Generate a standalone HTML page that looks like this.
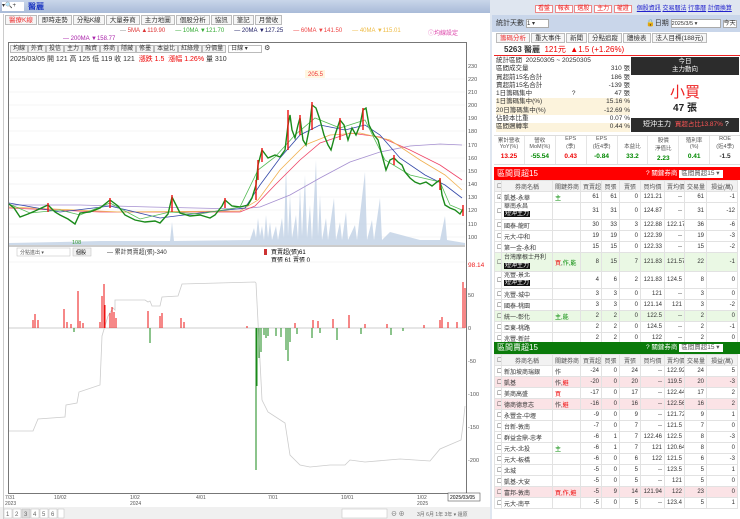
<!DOCTYPE html>
<html><head><meta charset="utf-8">
<style>
*{margin:0;padding:0;box-sizing:border-box}
body{width:740px;height:519px;overflow:hidden;background:#fff;font-family:"Liberation Sans","Noto Sans CJK TC",sans-serif;font-size:7px;color:#333;position:relative}
.a{position:absolute}
.tab{display:inline-block;border:1px solid #bbb;background:#f6f6f6;padding:0 3px;height:10px;line-height:9px;font-size:6.5px;margin-right:1px}
.btn{display:inline-block;border:1px solid #bbb;background:#f3f3f3;padding:0 2px;height:8px;line-height:7px;font-size:6px}
table{border-collapse:collapse;table-layout:fixed;width:243px;font-size:6px}
td{border:1px solid #e2e2e2;padding:0 2px;height:11px;text-align:right;white-space:nowrap;overflow:hidden}
td.n{text-align:left}
td.c{text-align:center}
.bl{background:#111;color:#fff;padding:0 1px}
.g{background:#eaf8e4}.p{background:#fbe3e6}
.hd td{background:#f2f2f2;text-align:center;color:#555}
.r{color:#e00}.gr{color:#080}
</style></head><body>
<div class="a" style="left:0;top:0;width:490px;height:13px;background:linear-gradient(#c9d6ea,#a9bbd8)"></div>
<div class="a" style="left:2px;top:2px;width:22px;height:9px;background:#fff;font-size:6px;line-height:9px">▾🔍+</div>
<div class="a" style="left:28px;top:1px;color:#1530c0;font-size:8px;font-weight:bold">醫麗</div>
<div class="a" style="left:5px;top:15px;white-space:nowrap"><span class="tab" style="color:#e33">醫療K線</span><span class="tab">即時走勢</span><span class="tab">分點K線</span><span class="tab">大量券商</span><span class="tab">主力地圖</span><span class="tab">個股分析</span><span class="tab">協訊</span><span class="tab">筆記</span><span class="tab">月營收</span></div>
<div class="a" style="left:120px;top:28px;font-size:6px;white-space:nowrap;color:#888">— <span style="color:#d33">5MA ▲119.90</span> &nbsp;&nbsp;&nbsp;&nbsp;&nbsp;<span style="color:#3a3">— 10MA ▼121.70</span> &nbsp;&nbsp;&nbsp;&nbsp;&nbsp;<span style="color:#226">— 20MA ▼127.25</span> &nbsp;&nbsp;&nbsp;&nbsp;&nbsp;<span style="color:#e44">— 60MA ▼141.50</span> &nbsp;&nbsp;&nbsp;&nbsp;&nbsp;<span style="color:#eb4">— 40MA ▼115.01</span></div>
<div class="a" style="left:428px;top:28px;font-size:6px;color:#d4a">ⓘ均線設定</div>
<div class="a" style="left:63px;top:36px;font-size:6px;color:#a2a">— 200MA ▼158.77</div>
<div class="a" style="left:8px;top:42px;width:459px;height:452px;border:1px solid #777"></div>
<div class="a" style="left:10px;top:44px;white-space:nowrap"><span class="btn">均線</span><span class="btn">外資</span><span class="btn">投信</span><span class="btn">主力</span><span class="btn">融資</span><span class="btn">券商</span><span class="btn">隱藏</span><span class="btn">修墨</span><span class="btn">本益比</span><span class="btn">紅綠燈</span><span class="btn">分價量</span> <span class="btn" style="width:34px;background:#fff">日線 ▾</span> ⚙</div>
<div class="a" style="left:10px;top:54px;font-size:7px;white-space:nowrap">2025/03/05 開 121 高 125 低 119 收 121 &nbsp;<span class="r">漲跌 1.5 &nbsp;漲幅 1.26%</span> 量 310</div>
<svg class="a" style="left:0;top:0" width="490" height="519">
<g stroke="#eee" stroke-width="0.6">
<line x1="9" y1="79" x2="465" y2="79"/><line x1="9" y1="92" x2="465" y2="92"/><line x1="9" y1="105" x2="465" y2="105"/><line x1="9" y1="118" x2="465" y2="118"/><line x1="9" y1="131" x2="465" y2="131"/><line x1="9" y1="145" x2="465" y2="145"/><line x1="9" y1="158" x2="465" y2="158"/><line x1="9" y1="171" x2="465" y2="171"/><line x1="9" y1="184" x2="465" y2="184"/><line x1="9" y1="197" x2="465" y2="197"/><line x1="9" y1="210" x2="465" y2="210"/><line x1="9" y1="224" x2="465" y2="224"/><line x1="9" y1="237" x2="465" y2="237"/>
</g>
<g font-size="5.5" fill="#555">
<text x="468" y="68">230</text><text x="468" y="81">220</text><text x="468" y="94">210</text><text x="468" y="107">200</text><text x="468" y="120">190</text><text x="468" y="133">180</text><text x="468" y="147">170</text><text x="468" y="160">160</text><text x="468" y="173">150</text><text x="468" y="186">140</text><text x="468" y="199">130</text><text x="468" y="212">120</text><text x="468" y="226">110</text><text x="468" y="239">100</text>
</g>
<path fill="#bccde3" fill-opacity="0.75" d="M9,245 L9,243 60,242 100,241 170,241 172,222 174,241 250,240 254,228 256,238 258,218 260,236 262,226 264,240 266,215 268,238 270,222 272,240 276,226 278,240 282,218 284,238 286,165 288,236 290,195 292,238 296,215 298,240 300,188 302,236 305,175 307,238 310,205 312,240 316,160 318,236 320,195 322,240 326,218 328,240 334,198 336,240 340,222 342,240 346,212 348,240 355,225 357,240 365,172 367,240 372,220 374,240 380,198 382,240 390,232 420,240 440,240 445,216 447,240 465,243 465,245Z"/>
<g fill="none" stroke-width="0.8">
<polyline stroke="#a58fd0" points="9,205 80,205 150,207 240,209 260,207 290,195 320,178 350,162 380,152 410,146 440,144 462,145"/>
<polyline stroke="#e46" points="9,208 100,212 240,212 255,206 275,185 300,160 320,143 350,133 380,137 410,150 440,165 462,180"/>
<polyline stroke="#f0b050" points="9,207 120,212 240,211 258,200 280,170 305,145 330,135 360,133 390,140 420,160 445,175 462,190"/>
<polyline stroke="#3348a8" points="9,203 60,212 110,206 160,218 200,213 245,208 260,185 280,158 300,135 320,125 345,130 365,125 380,135 400,158 425,175 445,185 462,198"/>
<polyline stroke="#5b5" points="9,204 30,213 60,210 80,215 110,203 140,219 170,212 200,214 240,207 258,170 275,157 295,135 315,118 340,128 365,120 385,160 410,175 440,182 450,205 462,210"/>
</g>
<polyline fill="none" stroke="#1a8a1a" stroke-width="1.4" points="9,204 14,208 20,217 28,214 35,211 48,205 55,212 60,215 68,219 75,224 80,213 90,212 100,208 110,200 118,206 125,215 135,220 145,222 155,221 160,223 168,214 172,197 176,205 180,213 190,216 200,215 210,218 215,215 222,206 225,200 232,206 240,207 248,205 252,198 256,185 258,165 262,150 268,158 275,155 280,157 285,150 288,125 290,115 292,130 295,138 298,125 300,118 303,140 306,145 309,130 312,105 316,108 320,120 324,135 328,145 331,150 335,135 340,120 344,125 348,140 352,128 356,135 360,125 363,110 366,108 369,125 374,135 378,140 382,155 386,170 390,160 394,158 398,162 402,165 405,172 410,178 415,182 420,184 426,182 432,186 437,182 440,180 442,195 445,205 450,208 455,210 460,214 463,209"/>
<g stroke="#e11" stroke-width="1.4">
<line x1="48" y1="212" x2="48" y2="203"/><line x1="110" y1="208" x2="110" y2="198"/><line x1="172" y1="212" x2="172" y2="195"/><line x1="225" y1="208" x2="225" y2="198"/><line x1="256" y1="200" x2="256" y2="180"/><line x1="258" y1="180" x2="258" y2="160"/><line x1="262" y1="162" x2="262" y2="148"/><line x1="288" y1="150" x2="288" y2="110"/><line x1="300" y1="135" x2="300" y2="115"/><line x1="312" y1="130" x2="312" y2="102"/><line x1="340" y1="140" x2="340" y2="118"/><line x1="363" y1="130" x2="363" y2="108"/><line x1="394" y1="165" x2="394" y2="155"/><line x1="440" y1="190" x2="440" y2="178"/><line x1="463" y1="216" x2="463" y2="205"/>
</g>
<rect x="305" y="70" width="20" height="8" fill="#fff6e0"/><text x="308" y="76" font-size="6" fill="#e33">205.5</text>
<text x="72" y="244" font-size="5.5" fill="#393">108</text>
<line x1="9" y1="246" x2="465" y2="246" stroke="#777" stroke-width="0.7"/>
<rect x="17" y="248" width="53" height="8" fill="#fff" stroke="#bbb" stroke-width="0.5"/><text x="20" y="254" font-size="5" fill="#555">分點進出 ▾</text>
<rect x="73" y="248" width="18" height="8" fill="#f2f2f2" stroke="#bbb" stroke-width="0.5"/><text x="76" y="254" font-size="5">個股</text>
<text x="107" y="254" font-size="6" fill="#333">— 累計買賣超(張)-340</text>
<rect x="264" y="249" width="3" height="6" fill="#c33"/><text x="271" y="254" font-size="6">買賣超(張)61</text>
<text x="271" y="262" font-size="6">買張 61 賣張 0</text>
<line x1="9" y1="262" x2="465" y2="262" stroke="#eee" stroke-width="0.6"/>
<line x1="9" y1="328" x2="465" y2="328" stroke="#999" stroke-width="0.6"/>
<g font-size="5.5" fill="#555"><text x="468" y="297">50</text><text x="468" y="330">0</text><text x="468" y="363">-50</text><text x="468" y="396">-100</text><text x="468" y="429">-150</text><text x="468" y="462">-200</text></g>
<text x="468" y="267" font-size="6.5" fill="#e22">98.14</text>
<polyline fill="none" stroke="#ccc" stroke-width="0.8" points="9,431 33,431 38,419 65,417 66,405 77,403 79,392 100,385 102,336 108,316 113,308 115,310 115,300 145,300 148,302 150,301 152,306 160,306 162,297 178,296 182,284 255,282 256,283 262,400 268,412 285,423 290,455 300,465 310,467 330,465 345,465 350,460 365,462 400,459 430,461 440,449 461,440 463,425 465,406"/>
<g stroke="#e11" stroke-width="1">
<line x1="33" y1="328" x2="33" y2="320"/><line x1="35" y1="328" x2="35" y2="314"/><line x1="38" y1="328" x2="38" y2="320"/><line x1="64" y1="328" x2="64" y2="309"/><line x1="67" y1="328" x2="67" y2="322"/><line x1="71" y1="328" x2="71" y2="324"/><line x1="78" y1="328" x2="78" y2="291"/><line x1="80" y1="328" x2="80" y2="321"/><line x1="83" y1="328" x2="83" y2="323"/><line x1="100" y1="328" x2="100" y2="322"/><line x1="102" y1="328" x2="102" y2="296"/><line x1="104" y1="328" x2="104" y2="284"/><line x1="105" y1="328" x2="105" y2="305"/><line x1="110" y1="328" x2="110" y2="313"/><line x1="112" y1="328" x2="112" y2="307"/><line x1="114" y1="328" x2="114" y2="312"/><line x1="116" y1="328" x2="116" y2="318"/><line x1="148" y1="328" x2="148" y2="311"/><line x1="160" y1="328" x2="160" y2="316"/><line x1="162" y1="328" x2="162" y2="313"/><line x1="181" y1="328" x2="181" y2="318"/><line x1="184" y1="328" x2="184" y2="322"/><line x1="247" y1="328" x2="247" y2="326"/><line x1="295" y1="328" x2="295" y2="323"/><line x1="313" y1="328" x2="313" y2="320"/><line x1="318" y1="328" x2="318" y2="321"/><line x1="333" y1="328" x2="333" y2="319"/><line x1="349" y1="328" x2="349" y2="315"/><line x1="365" y1="328" x2="365" y2="324"/><line x1="387" y1="328" x2="387" y2="324"/><line x1="424" y1="328" x2="424" y2="325"/><line x1="440" y1="328" x2="440" y2="320"/><line x1="442" y1="328" x2="442" y2="317"/><line x1="448" y1="328" x2="448" y2="322"/><line x1="457" y1="328" x2="457" y2="322"/><line x1="463" y1="328" x2="463" y2="282"/><line x1="465" y1="328" x2="465" y2="288"/>
</g>
<g stroke="#1a8a1a" stroke-width="1">
<line x1="74" y1="328" x2="74" y2="332"/><line x1="150" y1="328" x2="150" y2="343"/><line x1="256" y1="328" x2="256" y2="470"/><line x1="257" y1="328" x2="257" y2="386"/><line x1="259" y1="328" x2="259" y2="358"/><line x1="261" y1="328" x2="261" y2="352"/><line x1="264" y1="328" x2="264" y2="335"/><line x1="266" y1="328" x2="266" y2="338"/><line x1="268" y1="328" x2="268" y2="336"/><line x1="276" y1="328" x2="276" y2="336"/><line x1="281" y1="328" x2="281" y2="337"/><line x1="286" y1="328" x2="286" y2="350"/><line x1="288" y1="328" x2="288" y2="361"/><line x1="290" y1="328" x2="290" y2="342"/><line x1="297" y1="328" x2="297" y2="334"/><line x1="312" y1="328" x2="312" y2="338"/><line x1="320" y1="328" x2="320" y2="333"/><line x1="337" y1="328" x2="337" y2="340"/><line x1="361" y1="328" x2="361" y2="334"/><line x1="391" y1="328" x2="391" y2="335"/><line x1="403" y1="328" x2="403" y2="331"/>
</g>
<g font-size="5" fill="#555"><text x="5" y="499">7/31</text><text x="5" y="505">2023</text><text x="54" y="499">10/02</text><text x="130" y="499">1/02</text><text x="130" y="505">2024</text><text x="196" y="499">4/01</text><text x="268" y="499">7/01</text><text x="341" y="499">10/01</text><text x="417" y="499">1/02</text><text x="417" y="505">2025</text></g>
<rect x="448" y="493" width="32" height="8" fill="#fff" stroke="#555" stroke-width="0.6"/><text x="450" y="499" font-size="5">2025/03/05</text>
<rect x="0" y="507" width="490" height="12" fill="#f0f0f0"/>
<g font-size="6" fill="#666"><rect x="4" y="509" width="8" height="9" fill="#fff" stroke="#bbb" stroke-width="0.5"/><text x="6" y="516">1</text><rect x="13" y="509" width="8" height="9" fill="#fff" stroke="#bbb" stroke-width="0.5"/><text x="15" y="516">2</text><rect x="22" y="509" width="8" height="9" fill="#ddd" stroke="#bbb" stroke-width="0.5"/><text x="24" y="516">3</text><rect x="31" y="509" width="8" height="9" fill="#fff" stroke="#bbb" stroke-width="0.5"/><text x="33" y="516">4</text><rect x="40" y="509" width="8" height="9" fill="#fff" stroke="#bbb" stroke-width="0.5"/><text x="42" y="516">5</text><rect x="49" y="509" width="8" height="9" fill="#fff" stroke="#bbb" stroke-width="0.5"/><text x="51" y="516">6</text><rect x="58" y="509" width="6" height="9" fill="#fff" stroke="#bbb" stroke-width="0.5"/>
<rect x="342" y="509" width="45" height="9" fill="#fff" stroke="#bbb" stroke-width="0.5"/><text x="391" y="516">⊖ ⊕</text><text x="417" y="516" font-size="5">3月 6月 1年 3年 ▾ 還原</text></g>
</svg>
<div class="a" style="left:3px;top:14px;width:1px;height:505px;background:#ccc"></div>
<div class="a" style="left:490px;top:0;width:250px;height:519px;background:#dfe6f0"></div>
<div class="a" style="left:535px;top:3px;font-size:6px;white-space:nowrap"><span style="border:1px solid #e88;color:#e22;background:#fff;padding:0 2px">看盤</span> <span style="border:1px solid #e88;color:#e22;background:#fff;padding:0 2px">報表</span> <span style="border:1px solid #e88;color:#e22;background:#fff;padding:0 2px">選股</span> <span style="border:1px solid #e88;color:#e22;background:#fff;padding:0 2px">主力</span> <span style="border:1px solid #e88;color:#e22;background:#fff;padding:0 2px">權證</span> &nbsp; <u style="color:#22c">個股資訊</u> <u style="color:#22c">交易曆法</u> <u style="color:#22c">行事曆</u> <u style="color:#22c">計價換算</u></div>
<div class="a" style="left:492px;top:15px;width:248px;height:504px;background:#fff"></div>
<div class="a" style="left:492px;top:15px;width:248px;height:17px;background:#c9d6ea"></div>
<div class="a" style="left:496px;top:18px;font-size:7px">統計天數 <span style="display:inline-block;background:#fff;border:1px solid #aaa;width:23px;height:9px;font-size:6px;line-height:8px">1 ▾</span></div>
<div class="a" style="left:646px;top:18px;font-size:7px;white-space:nowrap">🔒日期 <span style="display:inline-block;background:#fff;border:1px solid #aaa;width:50px;height:9px;font-size:5.5px;line-height:8px">2025/3/5 ▾</span> <span style="border:1px solid #aaa;background:#fff;font-size:6px">今天</span></div>
<div class="a" style="left:496px;top:33px;white-space:nowrap"><span class="tab" style="color:#e33">籌碼分析</span><span class="tab">重大事件</span><span class="tab">新聞</span><span class="tab">分點追蹤</span><span class="tab">體檢表</span><span class="tab">法人目標(188元)</span></div>
<div class="a" style="left:494px;top:44px;width:246px;height:12px;border-bottom:1px solid #e22;font-size:8px;padding-left:10px;white-space:nowrap"><b style="color:#333">5263 醫麗</b> &nbsp;<span class="r">121元 &nbsp;▲1.5 (+1.26%)</span></div>
<div class="a" style="left:496px;top:57px;width:134px;font-size:6.5px;line-height:8.3px">
<div>統計區間 &nbsp;20250305 ~ 20250305</div>
<div style="display:flex;justify-content:space-between"><span>區間成交量</span><span>310 張</span></div>
<div style="display:flex;justify-content:space-between"><span>買超前15名合計</span><span>186 張</span></div>
<div style="display:flex;justify-content:space-between"><span>賣超前15名合計</span><span>-139 張</span></div>
<div style="display:flex;justify-content:space-between"><span>1日籌碼集中 &nbsp;&nbsp;&nbsp;&nbsp;&nbsp;&nbsp;&nbsp;&nbsp;&nbsp;&nbsp;&nbsp;&nbsp;&nbsp;&nbsp;&nbsp;&nbsp;&nbsp;&nbsp;&nbsp;&nbsp;&nbsp;?</span><span>47 張</span></div>
<div style="display:flex;justify-content:space-between;background:#fcf3dc"><span>1日籌碼集中(%)</span><span>15.16 %</span></div>
<div style="display:flex;justify-content:space-between;background:#fcf3dc"><span>20日籌碼集中(%)</span><span>-12.69 %</span></div>
<div style="display:flex;justify-content:space-between"><span>佔股本比重</span><span>0.07 %</span></div>
<div style="display:flex;justify-content:space-between;background:#fcf3dc"><span>區間週轉率</span><span>0.44 %</span></div>
</div>
<div class="a" style="left:631px;top:57px;width:108px;height:18px;background:#2c2c2c;color:#fff;text-align:center;font-size:6.5px;line-height:8px;padding-top:1px">今日<br>主力動向</div>
<div class="a" style="left:631px;top:81px;width:108px;text-align:center;font-size:15px;color:#e22">小買</div>
<div class="a" style="left:631px;top:99px;width:108px;text-align:center;font-size:10px;font-weight:bold;color:#222">47 張</div>
<div class="a" style="left:631px;top:118px;width:108px;height:14px;background:#2c2c2c;color:#fff;font-size:7px;line-height:14px;padding-left:12px;white-space:nowrap">短沖主力 &nbsp;<span style="color:#f55;font-size:6.5px">買超占比13.87%</span> ?</div>
<div class="a" style="left:494px;top:135px;width:246px;height:30px;border-top:1px solid #ddd;border-bottom:1px solid #ddd;display:flex;font-size:5.5px;color:#555;text-align:center">
<div style="flex:1;border-right:1px solid #e5e5e5">累計營收<br>YoY(%)<br><b class="r" style="font-size:6.5px;line-height:13px">13.25</b></div>
<div style="flex:1;border-right:1px solid #e5e5e5">營收<br>MoM(%)<br><b class="gr" style="font-size:6.5px;line-height:13px">-55.54</b></div>
<div style="flex:1;border-right:1px solid #e5e5e5">EPS<br>(季)<br><b class="r" style="font-size:6.5px;line-height:13px">0.43</b></div>
<div style="flex:1;border-right:1px solid #e5e5e5">EPS<br>(近4季)<br><b class="gr" style="font-size:6.5px;line-height:13px">-0.84</b></div>
<div style="flex:1;border-right:1px solid #e5e5e5"><br>本益比<br><b class="gr" style="font-size:6.5px;line-height:13px">33.2</b></div>
<div style="flex:1;border-right:1px solid #e5e5e5">股價<br>淨值比<br><b class="gr" style="font-size:6.5px;line-height:13px">2.23</b></div>
<div style="flex:1;border-right:1px solid #e5e5e5">殖利率<br>(%)<br><b class="gr" style="font-size:6.5px;line-height:13px">0.41</b></div>
<div style="flex:1">ROE<br>(近4季)<br><b style="font-size:6.5px;line-height:13px;color:#333">-1.5</b></div>
</div>
<div class="a" style="left:494px;top:167px;width:246px;height:13px;background:#f00;color:#fff;font-size:8px;line-height:13px;padding-left:3px">區間買超15<span style="position:absolute;left:152px;font-size:6.5px">? 關鍵券商 <span style="background:#fff;color:#555;padding:0 2px;display:inline-block;width:44px;line-height:8px">區間買超15 ▾</span></span></div>
<div class="a" style="left:494px;top:180px">
<table>
<colgroup><col style="width:7px"><col style="width:51px"><col style="width:28px"><col style="width:21px"><col style="width:18px"><col style="width:21px"><col style="width:24px"><col style="width:20px"><col style="width:22px"><col style="width:31px"></colgroup>
<tr class="hd"><td>☐</td><td>券商名稱</td><td>關鍵券商</td><td>買賣超</td><td>買張</td><td>賣張</td><td>買均價</td><td>賣均價</td><td>交易量</td><td>損益(萬)</td></tr>
<tr><td class="c">☑</td><td class="n">凱基-永華</td><td class="n gr">主</td><td>61</td><td>61</td><td>0</td><td>121.21</td><td>--</td><td>61</td><td>-1</td></tr>
<tr><td>☐</td><td class="n" style="height:17px;line-height:7px">華南永昌<br><span class="bl">短沖主力</span></td><td></td><td>31</td><td>31</td><td>0</td><td>124.87</td><td>--</td><td>31</td><td>-12</td></tr>
<tr><td>☐</td><td class="n">國泰-龍町</td><td></td><td>30</td><td>33</td><td>3</td><td>122.88</td><td>122.17</td><td>36</td><td>-6</td></tr>
<tr><td>☐</td><td class="n">元大-中和</td><td></td><td>19</td><td>19</td><td>0</td><td>122.39</td><td>--</td><td>19</td><td>-3</td></tr>
<tr><td>☐</td><td class="n">第一金-永和</td><td></td><td>15</td><td>15</td><td>0</td><td>122.33</td><td>--</td><td>15</td><td>-2</td></tr>
<tr class="g"><td>☐</td><td class="n" style="height:19px;line-height:8px">台灣摩根士丹利<br><span class="bl">短沖主力</span></td><td class="n"><span class="r">買</span>,<span class="gr">作,能</span></td><td>8</td><td>15</td><td>7</td><td>121.83</td><td>121.57</td><td>22</td><td>-1</td></tr>
<tr><td>☐</td><td class="n" style="height:17px;line-height:7px">兆豐-景北<br><span class="bl">短沖主力</span></td><td></td><td>4</td><td>6</td><td>2</td><td>121.83</td><td>124.5</td><td>8</td><td>0</td></tr>
<tr><td>☐</td><td class="n">兆豐-城中</td><td></td><td>3</td><td>3</td><td>0</td><td>121</td><td>--</td><td>3</td><td>0</td></tr>
<tr><td>☐</td><td class="n">國泰-桃園</td><td></td><td>3</td><td>3</td><td>0</td><td>121.14</td><td>121</td><td>3</td><td>-2</td></tr>
<tr class="g"><td>☐</td><td class="n">統一-彰化</td><td class="n gr">主,能</td><td>2</td><td>2</td><td>0</td><td>122.5</td><td>--</td><td>2</td><td>0</td></tr>
<tr><td>☐</td><td class="n">亞東-桃路</td><td></td><td>2</td><td>2</td><td>0</td><td>124.5</td><td>--</td><td>2</td><td>-1</td></tr>
<tr><td>☐</td><td class="n">兆豐-新莊</td><td></td><td>2</td><td>2</td><td>0</td><td>122</td><td>--</td><td>2</td><td>0</td></tr>
</table></div>
<div class="a" style="left:494px;top:342px;width:246px;height:12px;background:#0a7a0a;color:#fff;font-size:8px;line-height:12px;padding-left:3px">區間賣超15<span style="position:absolute;left:152px;font-size:6.5px">? 關鍵券商 <span style="background:#fff;color:#555;padding:0 2px;display:inline-block;width:44px;line-height:8px">區間賣超15 ▾</span></span></div>
<div class="a" style="left:494px;top:354px">
<table>
<colgroup><col style="width:7px"><col style="width:51px"><col style="width:28px"><col style="width:21px"><col style="width:18px"><col style="width:21px"><col style="width:24px"><col style="width:20px"><col style="width:22px"><col style="width:31px"></colgroup>
<tr class="hd"><td>☐</td><td>券商名稱</td><td>關鍵券商</td><td>買賣超</td><td>買張</td><td>賣張</td><td>買均價</td><td>賣均價</td><td>交易量</td><td>損益(萬)</td></tr>
<tr><td>☐</td><td class="n">新加坡商瑞銀</td><td class="n">作</td><td>-24</td><td>0</td><td>24</td><td>--</td><td>122.92</td><td>24</td><td>5</td></tr>
<tr class="p"><td>☐</td><td class="n">凱基</td><td class="n">作,<span class="r">避</span></td><td>-20</td><td>0</td><td>20</td><td>--</td><td>119.5</td><td>20</td><td>-3</td></tr>
<tr><td>☐</td><td class="n">美商高盛</td><td class="n r">買</td><td>-17</td><td>0</td><td>17</td><td>--</td><td>122.44</td><td>17</td><td>2</td></tr>
<tr class="p"><td>☐</td><td class="n">德商德意志</td><td class="n">作,<span class="r">避</span></td><td>-16</td><td>0</td><td>16</td><td>--</td><td>122.56</td><td>16</td><td>2</td></tr>
<tr><td>☐</td><td class="n">永豐金-中壢</td><td></td><td>-9</td><td>0</td><td>9</td><td>--</td><td>121.72</td><td>9</td><td>1</td></tr>
<tr><td>☐</td><td class="n">台新-敦南</td><td></td><td>-7</td><td>0</td><td>7</td><td>--</td><td>121.5</td><td>7</td><td>0</td></tr>
<tr><td>☐</td><td class="n">群益金鼎-忠孝</td><td></td><td>-6</td><td>1</td><td>7</td><td>122.46</td><td>122.5</td><td>8</td><td>-3</td></tr>
<tr><td>☐</td><td class="n">元大-北投</td><td class="n gr">主</td><td>-6</td><td>1</td><td>7</td><td>121</td><td>120.64</td><td>8</td><td>0</td></tr>
<tr><td>☐</td><td class="n">元大-板橋</td><td></td><td>-6</td><td>0</td><td>6</td><td>122</td><td>121.5</td><td>6</td><td>-3</td></tr>
<tr><td>☐</td><td class="n">北城</td><td></td><td>-5</td><td>0</td><td>5</td><td>--</td><td>123.5</td><td>5</td><td>1</td></tr>
<tr><td>☐</td><td class="n">凱基-大安</td><td></td><td>-5</td><td>0</td><td>5</td><td>--</td><td>121</td><td>5</td><td>0</td></tr>
<tr class="p"><td>☐</td><td class="n">富邦-敦南</td><td class="n r">買,作,避</td><td>-5</td><td>9</td><td>14</td><td>121.94</td><td>122</td><td>23</td><td>0</td></tr>
<tr><td>☐</td><td class="n">元大-南平</td><td></td><td>-5</td><td>0</td><td>5</td><td>--</td><td>123.4</td><td>5</td><td>1</td></tr>
</table></div>
</body></html>
